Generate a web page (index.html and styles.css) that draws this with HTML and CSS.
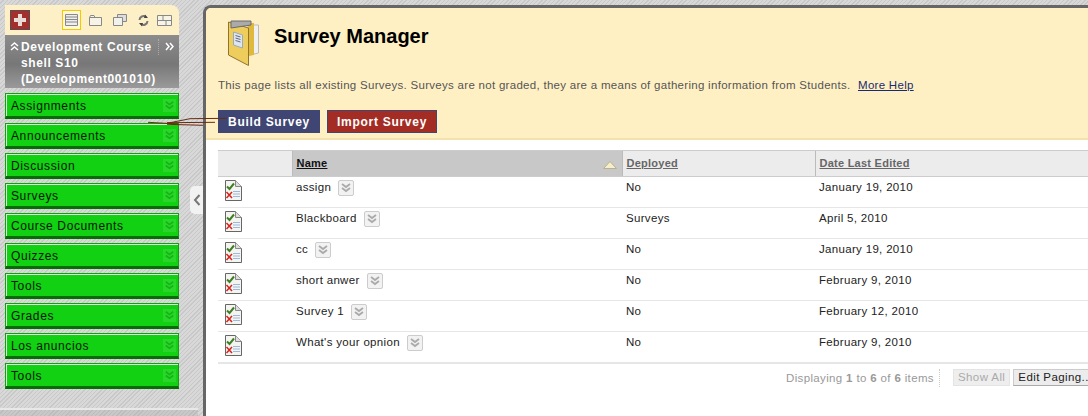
FILE: index.html
```html
<!DOCTYPE html>
<html lang="en">
<head>
<meta charset="utf-8">
<title>Survey Manager</title>
<link rel="stylesheet" href="styles.css">
</head>
<body>
<svg width="0" height="0" class="defs">
  <defs>
    <symbol id="doc" viewBox="0 0 17 21">
      <path d="M.5.5H10.500L16.500 6.500V20.500H.5Z" fill="#f4f4f0" stroke="#666"/>
      <path d="M10.500.5V6.500H16.500" fill="#ddd" stroke="#888"/>
      <path d="M8 11.500H15M8 14H15M8 16.500H15" stroke="#9db8dc" fill="none"/>
      <path d="M2 6.500L4.500 9L9 3.500" stroke="#3f7f22" stroke-width="2" fill="none"/>
      <path d="M1.500 12L7 18M7 12L1.500 18" stroke="#d8231c" stroke-width="1.500" fill="none"/>
    </symbol>
    <symbol id="chev" viewBox="0 0 14 14">
      <path d="M3 3L7 6L11 3M3 7L7 10L11 7" fill="none" stroke="currentColor" stroke-width="1.800"/>
    </symbol>
  </defs>
</svg>

<div class="page">
  <aside class="sidebar">
    <div class="toolbar">
      <span class="add"><svg width="14" height="14" viewBox="0 0 14 14"><path d="M5 1H9V5H13V9H9V13H5V9H1V5H5Z" fill="#e8dcd8"/></svg></span>
      <div class="tools">
        <span class="tool active"><svg width="13" height="12" viewBox="0 0 13 12"><path d="M.5.5H12.500V11.500H.5ZM.5 3H12.500M.5 5.500H12.500M.5 8H12.500" fill="#eee" stroke="#888"/></svg></span>
        <span class="tool"><svg width="13" height="11" viewBox="0 0 13 11"><path d="M.5 2.500V10.500H12.500V2.500H6L5 .5H1.500L.5 2.500H6" fill="#f7f3e6" stroke="#888"/></svg></span>
        <span class="tool tool-wide"><svg width="14" height="12" viewBox="0 0 14 12"><path d="M4.500.5H13.500V7.500H4.500Z" fill="#ddd" stroke="#888"/><path d="M.5 3.500H9.500V11.500H.5Z" fill="#f2f2ec" stroke="#888"/></svg></span>
        <span class="tool tool-wide"><svg width="11" height="13" viewBox="0 0 11 13"><path d="M1.500 6A4 4 0 0 1 8 3M9.500 7A4 4 0 0 1 3 10" fill="none" stroke="#777" stroke-width="2"/><path d="M7 .5L10 4H6ZM4 12.500L1 9H5Z" fill="#444"/></svg></span>
        <span class="tool"><svg width="15" height="11" viewBox="0 0 15 11"><path d="M.5.5H14.500V10.500H.5ZM.5 5.500H14.500M6 .5V5.500M9 5.500V10.500" fill="#f7f3e6" stroke="#888"/></svg></span>
      </div>
    </div>
    <div class="course">
      <svg class="course-up" width="9" height="9" viewBox="0 0 9 9"><path d="M1 4L4.500 1L8 4M1 8L4.500 5L8 8" fill="none" stroke="#fff" stroke-width="1.500"/></svg>
      <h2 class="course-name">Development Course shell S10 (Development001010)</h2>
      <svg class="course-more" width="9" height="9" viewBox="0 0 9 9"><path d="M1 1L4 4.500L1 8M5 1L8 4.500L5 8" fill="none" stroke="#fff" stroke-width="1.500"/></svg>
    </div>
    <nav class="menu">
      <a class="menu-item">Assignments<svg class="menu-chev"><use href="#chev"/></svg></a>
      <a class="menu-item">Announcements<svg class="menu-chev"><use href="#chev"/></svg></a>
      <a class="menu-item">Discussion<svg class="menu-chev"><use href="#chev"/></svg></a>
      <a class="menu-item">Surveys<svg class="menu-chev"><use href="#chev"/></svg></a>
      <a class="menu-item">Course Documents<svg class="menu-chev"><use href="#chev"/></svg></a>
      <a class="menu-item">Quizzes<svg class="menu-chev"><use href="#chev"/></svg></a>
      <a class="menu-item">Tools<svg class="menu-chev"><use href="#chev"/></svg></a>
      <a class="menu-item">Grades<svg class="menu-chev"><use href="#chev"/></svg></a>
      <a class="menu-item">Los anuncios<svg class="menu-chev"><use href="#chev"/></svg></a>
      <a class="menu-item">Tools<svg class="menu-chev"><use href="#chev"/></svg></a>
    </nav>
    <div class="side-foot"></div>
  </aside>

  <span class="collapse"><svg width="8" height="12" viewBox="0 0 8 12"><path d="M6.500 1L2 6L6.500 11" fill="none" stroke="#777" stroke-width="2"/></svg></span>

  <main class="main">
    <header class="head">
      <div class="title-row">
        <svg class="clip" width="31" height="46" viewBox="0 0 31 46">
          <path d="M20 5H30.500V33L20 35.500Z" fill="#f0f0f0" stroke="#bbb"/>
          <path d="M20 3H26V6L26 35L20 36Z" fill="#e0b93c"/>
          <path d="M.5 2L20.500 8V45.500L.5 35Z" fill="#efcd5c" stroke="#8d7530"/>
          <path d="M3 1H23V5L3 8Z" fill="#aaa" stroke="#6a6a6a"/>
          <path d="M5.500 12L14.500 15V28L5.500 25Z" fill="#dce6f2" stroke="#9ab"/>
          <path d="M7.500 15.500L12.500 17M7.500 18L12.500 19.500M7.500 20.500L12.500 22" stroke="#667"/>
        </svg>
        <h1 class="title">Survey Manager</h1>
      </div>
      <p class="desc">This page lists all existing Surveys. Surveys are not graded, they are a means of gathering information from Students. <a class="help">More Help</a></p>
      <div class="actions">
        <a class="btn btn-blue">Build Survey</a>
        <a class="btn btn-red">Import Survey</a>
      </div>
    </header>

    <section class="content">
      <table class="grid">
        <colgroup><col class="c-icon"><col class="c-name"><col class="c-dep"><col class="c-date"></colgroup>
        <thead>
          <tr>
            <th class="th-blank"></th>
            <th class="th-name"><span>Name</span><svg class="sort" width="14" height="8" viewBox="0 0 14 8"><path d="M7 .5L13.500 7.500H.5Z" fill="#f6eec8" stroke="#b8b090"/></svg></th>
            <th><span>Deployed</span></th>
            <th><span>Date Last Edited</span></th>
          </tr>
        </thead>
        <tbody>
          <tr><td class="td-icon"><svg class="doc"><use href="#doc"/></svg></td><td class="td-name">assign<span class="drop"><svg><use href="#chev"/></svg></span></td><td>No</td><td>January 19, 2010</td></tr>
          <tr><td class="td-icon"><svg class="doc"><use href="#doc"/></svg></td><td class="td-name">Blackboard<span class="drop"><svg><use href="#chev"/></svg></span></td><td>Surveys</td><td>April 5, 2010</td></tr>
          <tr><td class="td-icon"><svg class="doc"><use href="#doc"/></svg></td><td class="td-name">cc<span class="drop"><svg><use href="#chev"/></svg></span></td><td>No</td><td>January 19, 2010</td></tr>
          <tr><td class="td-icon"><svg class="doc"><use href="#doc"/></svg></td><td class="td-name">short anwer<span class="drop"><svg><use href="#chev"/></svg></span></td><td>No</td><td>February 9, 2010</td></tr>
          <tr><td class="td-icon"><svg class="doc"><use href="#doc"/></svg></td><td class="td-name">Survey 1<span class="drop"><svg><use href="#chev"/></svg></span></td><td>No</td><td>February 12, 2010</td></tr>
          <tr><td class="td-icon"><svg class="doc"><use href="#doc"/></svg></td><td class="td-name">What's your opnion<span class="drop"><svg><use href="#chev"/></svg></span></td><td>No</td><td>February 9, 2010</td></tr>
        </tbody>
      </table>
      <div class="paging">
        <span class="count">Displaying <b>1</b> to <b>6</b> of <b>6</b> items</span>
        <span class="pbtn pbtn-off">Show All</span>
        <span class="pbtn pbtn-edit">Edit Paging..</span>
      </div>
    </section>
  </main>

  <svg class="scribble" width="90" height="16" viewBox="0 0 90 16"><path d="M1 11.300L31 13M20 12.300L43 7.700L80 7.300M20 11.700L68 11.300M20 13.300L56 14.300" fill="none" stroke="#6b2a10"/></svg>
</div>
</body>
</html>
```

FILE: styles.css
```css
* { box-sizing: border-box; }
html, body { margin: 0; height: 100%; overflow: hidden; }
body {
  font-family: "Liberation Sans", Arial, sans-serif;
  font-size: 12px;
  color: #222;
}
.defs { position: absolute; }
.page {
  position: relative;
  display: flex;
  width: 1088px;
  height: 416px;
  padding-top: 5px;
  overflow: hidden;
  background: repeating-linear-gradient(135deg, #d8d8d8 0 2px, #c8c8c8 2px 3px);
}
.sidebar {
  display: flex;
  flex-direction: column;
  flex: none;
  width: 198px;
  padding-left: 5px;
  padding-right: 19px;
}
.toolbar {
  display: flex;
  align-items: center;
  height: 30px;
  padding-left: 5px;
  background: #fdefc6;
  border-radius: 0 8px 0 0;
}
.add {
  display: flex;
  align-items: center;
  justify-content: center;
  width: 20px;
  height: 20px;
  background: #a5302b;
  border: 1px solid #5c4a55;
}
.tools { display: flex; align-items: center; gap: 8px; margin-left: 32px; }
.tool { display: flex; align-items: center; justify-content: center; }
.tool-wide { margin-left: 3px; }
.tool.active { width: 19px; height: 20px; background: #fff7dc; border: 1px solid #f5c800; }
.course {
  display: flex;
  align-items: flex-start;
  height: 53px;
  padding: 4px 0 0 5px;
  color: #fff;
  background: linear-gradient(#8c8c8c, #777 55%, #9a9a9a);
}
.course-up { flex: none; margin: 3px 2px 0 0; }
.course-name {
  flex: none;
  width: 138px;
  height: 16px;
  margin: 0;
  font-size: 12px;
  line-height: 16px;
  font-weight: bold;
  letter-spacing: .6px;
  text-align: left;
  border-right: 1px dotted #aaa;
}
.course-more { flex: none; margin: 3px 0 0 6px; }
.menu { display: flex; flex-direction: column; gap: 4px; padding-top: 5px; }
.menu-item {
  display: flex;
  align-items: center;
  justify-content: space-between;
  height: 26px;
  padding: 1px 2px 0 5px;
  color: #051505;
  font-size: 12px;
  letter-spacing: .62px;
  background: #12d012;
  border: 1px solid #12a012;
  border-bottom: 3px solid #046e04;
  box-shadow: inset 1px 1px 0 #d8f5d8;
}
.menu-chev {
  width: 13px;
  height: 13px;
  color: #14b514;
  background: #2bd62b;
}
.side-foot {
  flex: 1;
  margin: 19px -19px 0 -5px;
  background: repeating-linear-gradient(135deg, #c8c8c8 0 2px, #bcbcbc 2px 3px);
  border-top: 2px solid #e8e8e8;
}
.collapse {
  position: absolute;
  left: 190px;
  top: 186px;
  display: flex;
  align-items: center;
  justify-content: center;
  width: 13px;
  height: 28px;
  background: #f2f2f2;
  border-radius: 5px 0 0 5px;
}
.main {
  flex: none;
  width: 900px;
  margin-left: 5px;
  background: #fff;
  border: 3px solid #666;
  border-width: 3px 0 0 3px;
  border-radius: 8px 0 0 0;
  overflow: hidden;
}
.head {
  height: 132px;
  padding: 12px 12px 0;
  background: #fff0c4;
  border-bottom: 2px solid #f3e2ad;
}
.title-row { display: flex; align-items: flex-start; }
.clip { margin-left: 10px; }
.title { margin: 4px 0 0 15px; font-size: 20px; line-height: 24px; font-weight: bold; color: #000; }
.desc { margin: 11px 0 0; font-size: 11.500px; line-height: 16px; letter-spacing: .29px; color: #555; white-space: nowrap; }
.help { color: #1a2a70; text-decoration: underline; margin-left: 4px; }
.actions { display: flex; gap: 7px; margin-top: 17px; }
.btn {
  display: block;
  height: 23px;
  padding: 1px 10px 0;
  font-size: 12px;
  line-height: 23px;
  font-weight: bold;
  letter-spacing: .72px;
  color: #fff;
}
.btn-blue { background: #3f4673; }
.btn-red { padding: 1px 9px 0; background: #a32d24; border: 1px solid #3f4673; line-height: 20px; }
.content { padding: 10px 0 0 12px; }
.grid { table-layout: fixed; width: 880px; border-collapse: collapse; }
.c-icon { width: 74px; }
.c-name { width: 330px; }
.c-dep { width: 193px; }
.c-date { width: 283px; }
.grid th {
  height: 26px;
  padding: 0 0 2px 4px;
  font-size: 11px;
  font-weight: bold;
  text-align: left;
  letter-spacing: .25px;
  color: #666;
  background: #ececec;
  border-top: 1px solid #ccc;
  border-bottom: 1px solid #ccc;
  border-left: 1px solid #bbb;
}
.grid th span { text-decoration: underline; }
.grid th.th-blank { border-left: 0; }
.grid th.th-name { position: relative; color: #111; background: #c8c8c8; }
.sort { position: absolute; right: 5px; top: 10px; }
.grid td {
  height: 31px;
  padding: 0 0 10px 4px;
  font-size: 11.500px;
  letter-spacing: .32px;
  color: #222;
  border-bottom: 1px solid #e6e6e6;
}
.grid tr:last-child td { border-bottom-width: 2px; }
.grid td.td-icon { padding: 0 0 3px 7px; }
.doc { display: block; width: 17px; height: 21px; }
.grid td.td-name { padding: 0 0 8px 4px; }
.drop {
  display: inline-block;
  width: 16px;
  height: 16px;
  margin-left: 7px;
  color: #aaa;
  background: #f2f2f2;
  border: 1px solid #ccc;
  border-radius: 2px;
  vertical-align: middle;
}
.drop svg { display: block; width: 14px; height: 14px; }
.paging { display: flex; align-items: center; width: 885px; margin-top: 5px; padding-left: 568px; white-space: nowrap; }
.count { flex: none; width: 154px; margin-right: 13px; font-size: 11.500px; letter-spacing: .35px; color: #999; border-right: 1px dotted #ccc; line-height: 18px; }
.pbtn {
  flex: none;
  height: 17px;
  padding: 0 4px;
  margin-right: 3px;
  font-size: 11.500px;
  line-height: 15px;
  letter-spacing: .4px;
  color: #222;
  background: #ececec;
  border: 1px solid #ccc;
  border-bottom-color: #aaa;
}
.pbtn-edit { padding-right: 10px; margin-right: 0; }
.pbtn-off { color: #aaa; background: #eee; border-color: #e4e4e4; }
.scribble { position: absolute; left: 147px; top: 111px; }
```
